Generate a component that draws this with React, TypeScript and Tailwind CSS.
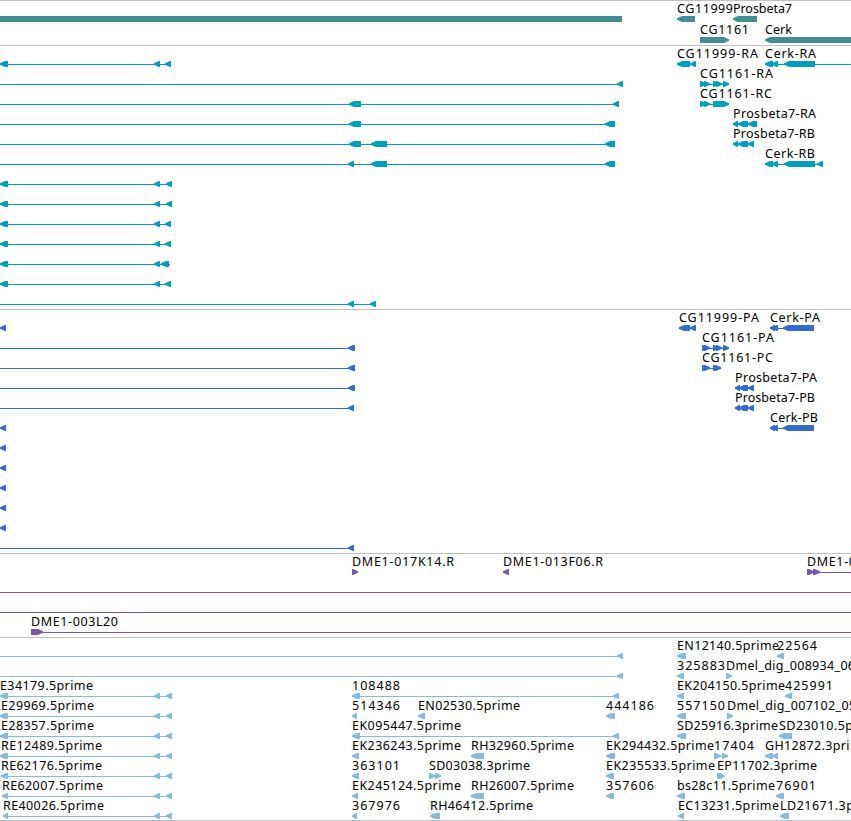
type Exon = [start: number, end: number];

interface Feature {
  exons: Exon[];
  dir?: "left" | "right";
  from?: number;
  to?: number;
  label?: string;
  labelX?: number;
  labelWidth?: number;
}

interface TrackProps {
  color: string;
  rows: Feature[][];
  className?: string;
}

const WIDTH = 851;

const left = (exons: Exon[], label?: string, labelWidth?: number, extra?: Partial<Feature>): Feature => ({
  exons,
  dir: "left",
  label,
  labelWidth,
  ...extra,
});

const right = (exons: Exon[], label?: string, labelWidth?: number, extra?: Partial<Feature>): Feature => ({
  exons,
  dir: "right",
  label,
  labelWidth,
  ...extra,
});

const upstream = (end: number): Feature => left([[0, 8], [154, 160], [end - 6, end]], undefined, undefined, { from: 0 });

const spanning = (exons: Exon[]): Feature => left(exons, undefined, undefined, { from: 0 });

const genes: Feature[][] = [
  [
    left([[-10, 622]]),
    left([[677, 695]], "CG11999", 56),
    left([[733, 757]], "Prosbeta7", 59),
  ],
  [
    right([[700, 729]], "CG1161", 49),
    left([[765, 860]], "Cerk", 27),
  ],
];

const transcripts: Feature[][] = [
  [
    upstream(171),
    left([[677, 690], [690, 696]], "CG11999-RA", 81),
    left([[765, 773], [772, 778], [784, 815]], "Cerk-RA", 51, { to: WIDTH }),
  ],
  [
    spanning([[617, 623]]),
    right([[700, 706], [704, 710], [713, 719], [716, 722], [723, 729]], "CG1161-RA", 73),
  ],
  [
    spanning([[349, 361], [613, 619]]),
    right([[700, 706], [704, 710], [713, 719], [715, 729]], "CG1161-RC", 72),
  ],
  [
    spanning([[349, 361], [605, 615]]),
    left([[733, 738], [738, 748], [748, 757]], "Prosbeta7-RA", 83),
  ],
  [
    spanning([[349, 361], [371, 387], [605, 615]]),
    left([[733, 738], [738, 748], [748, 754]], "Prosbeta7-RB", 82),
  ],
  [
    spanning([[348, 354], [371, 387], [605, 615]]),
    left([[765, 773], [772, 778], [784, 815], [817, 823]], "Cerk-RB", 50),
  ],
  [upstream(172)],
  [upstream(172)],
  [upstream(171)],
  [upstream(171)],
  [left([[0, 8], [154, 160], [161, 169]], undefined, undefined, { to: 170 })],
  [upstream(171)],
  [spanning([[348, 354], [370, 376]])],
];

const proteins: Feature[][] = [
  [
    left([[0, 6]]),
    left([[679, 690], [690, 696]], "CG11999-PA", 80),
    left([[770, 775], [772, 778], [783, 814]], "Cerk-PA", 50),
  ],
  [
    spanning([[348, 355]]),
    right([[702, 708], [704, 710], [713, 719], [716, 722], [723, 729]], "CG1161-PA", 72),
  ],
  [
    spanning([[348, 355]]),
    right([[702, 708], [704, 710], [713, 719], [715, 721]], "CG1161-PC", 71),
  ],
  [
    spanning([[348, 355]]),
    left([[735, 740], [739, 748], [748, 754]], "Prosbeta7-PA", 82),
  ],
  [
    spanning([[348, 354]]),
    left([[735, 740], [739, 748], [748, 754]], "Prosbeta7-PB", 80),
  ],
  [
    left([[0, 6]]),
    left([[770, 775], [772, 778], [783, 814]], "Cerk-PB", 48),
  ],
  [left([[0, 6]])],
  [left([[0, 6]])],
  [left([[0, 6]])],
  [left([[0, 6]])],
  [left([[0, 6]])],
  [spanning([[348, 354]])],
];

const clones: Feature[][] = [
  [
    right([[352, 358]], "DME1-017K14.R", 102),
    left([[503, 509]], "DME1-013F06.R", 100),
    right([[807, 814], [813, 820]], "DME1-0", 49, { to: WIDTH }),
  ],
  [right([], undefined, undefined, { from: 0, to: WIDTH })],
  [right([], undefined, undefined, { from: 0, to: WIDTH })],
  [right([[31, 43]], "DME1-003L20", 87, { to: WIDTH })],
];

const ests: Feature[][] = [
  [
    spanning([[617, 623]]),
    left([[677, 686]], "EN12140.5prime", 102),
    left([[777, 784]], "22564", 40),
  ],
  [
    spanning([[617, 623]]),
    left([[677, 684]], "325883", 48),
    right([[726, 732]], "Dmel_dig_008934_06", 129),
  ],
  [
    left([[0, 8], [154, 160], [166, 172]], "E34179.5prime", 93, { labelX: 0 }),
    left([[352, 360], [613, 619]], "108488", 48),
    left([[677, 684]], "EK204150.5prime", 108),
    left([[785, 792]], "425991", 48),
  ],
  [
    left([[0, 8], [154, 160], [166, 172]], "LE29969.5prime", 100, { labelX: -6 }),
    left([[352, 357]], "514346", 48),
    left([[418, 425]], "EN02530.5prime", 102),
    left([[606, 615]], "444186", 48),
    left([[677, 686]], "557150", 48),
    right([[727, 733]], "Dmel_dig_007102_05", 129),
  ],
  [
    left([[0, 8], [154, 160], [166, 172]], "LE28357.5prime", 100, { labelX: -6 }),
    left([[352, 360], [613, 619]], "EK095447.5prime", 109),
    left([[677, 686]], "SD25916.3prime", 101),
    left([[779, 792]], "SD23010.5prime", 103),
  ],
  [
    left([[0, 8], [154, 160], [166, 172]], "RE12489.5prime", 101, { labelX: 1 }),
    left([[352, 359]], "EK236243.5prime", 109),
    left([[471, 484]], "RH32960.5prime", 103),
    left([[606, 615]], "EK294432.5prime", 108),
    right([[714, 721], [722, 728]], "17404", 40),
    left([[765, 773], [772, 778]], "GH12872.3prime", 104),
  ],
  [
    left([[1, 8], [154, 160], [166, 172]], "RE62176.5prime", 101),
    left([[352, 359]], "363101", 48),
    right([[429, 435], [435, 441]], "SD03038.3prime", 101),
    left([[606, 614]], "EK235533.5prime", 109),
    right([[717, 725]], "EP11702.3prime", 100),
  ],
  [
    left([[2, 8], [154, 160], [166, 172]], "RE62007.5prime", 101),
    left([[352, 358]], "EK245124.5prime", 109),
    left([[471, 484]], "RH26007.5prime", 103),
    left([[606, 614]], "357606", 48),
    left([[677, 685]], "bs28c11.5prime", 98),
    left([[776, 784]], "76901", 40),
  ],
  [
    left([[3, 8], [154, 160], [166, 172]], "RE40026.5prime", 101),
    left([[352, 357]], "367976", 48),
    left([[430, 440]], "RH46412.5prime", 103),
    left([[678, 684]], "EC13231.5prime", 101),
    left([[780, 789]], "LD21671.3prime", 103),
  ],
];

// Exon block with a blunt arrow head on the side the feature points to
const exonPoints = ([start, end]: Exon, dir: Feature["dir"]) => {
  const head = Math.min(5, end - start - 1);
  if (dir === "right") {
    return `${start},13 ${end - head},13 ${end},15.2 ${end},16.8 ${end - head},19 ${start},19`;
  }
  return `${start},15.2 ${start + head},13 ${end},13 ${end},19 ${start + head},19 ${start},16.8`;
};

const FeatureGlyph = ({ feature, color }: { feature: Feature; color: string }) => {
  const { exons, dir, label, labelWidth } = feature;
  const start = feature.from ?? exons[0][0];
  const end = feature.to ?? exons[exons.length - 1][1];

  return (
    <g fill={color}>
      {(exons.length !== 1 || feature.from !== undefined || feature.to !== undefined) && (
        <rect x={start} y={16} width={end - start} height={1} />
      )}
      {exons.map((exon, i) => (
        <polygon key={i} points={exonPoints(exon, dir)} />
      ))}
      {label && (
        <text x={feature.labelX ?? start} y={10} textLength={labelWidth} fill="#000000">
          {label}
        </text>
      )}
    </g>
  );
};

const Track = ({ color, rows, className = "pb-px" }: TrackProps) => {
  return (
    <section className={`flex flex-col border-t border-[#c0c0c0] pt-0.5 ${className}`}>
      {rows.map((features, i) => (
        <svg key={i} width={WIDTH} height={20} className="block shrink-0 overflow-visible">
          {features.map((feature, j) => (
            <FeatureGlyph key={j} feature={feature} color={color} />
          ))}
        </svg>
      ))}
    </section>
  );
};

export default function App() {
  return (
    <main className="h-[821px] w-[851px] overflow-hidden border-b border-[#c0c0c0] bg-white font-['Noto_Sans',sans-serif] text-[12.5px]">
      <Track color="#408e91" rows={genes} className="gap-px pb-px" />
      <Track color="#009ebf" rows={transcripts} />
      <Track color="#326ccc" rows={proteins} />
      <Track color="#7858a8" rows={clones} />
      <Track color="#86bbdc" rows={ests} className="pb-0" />
    </main>
  );
}
